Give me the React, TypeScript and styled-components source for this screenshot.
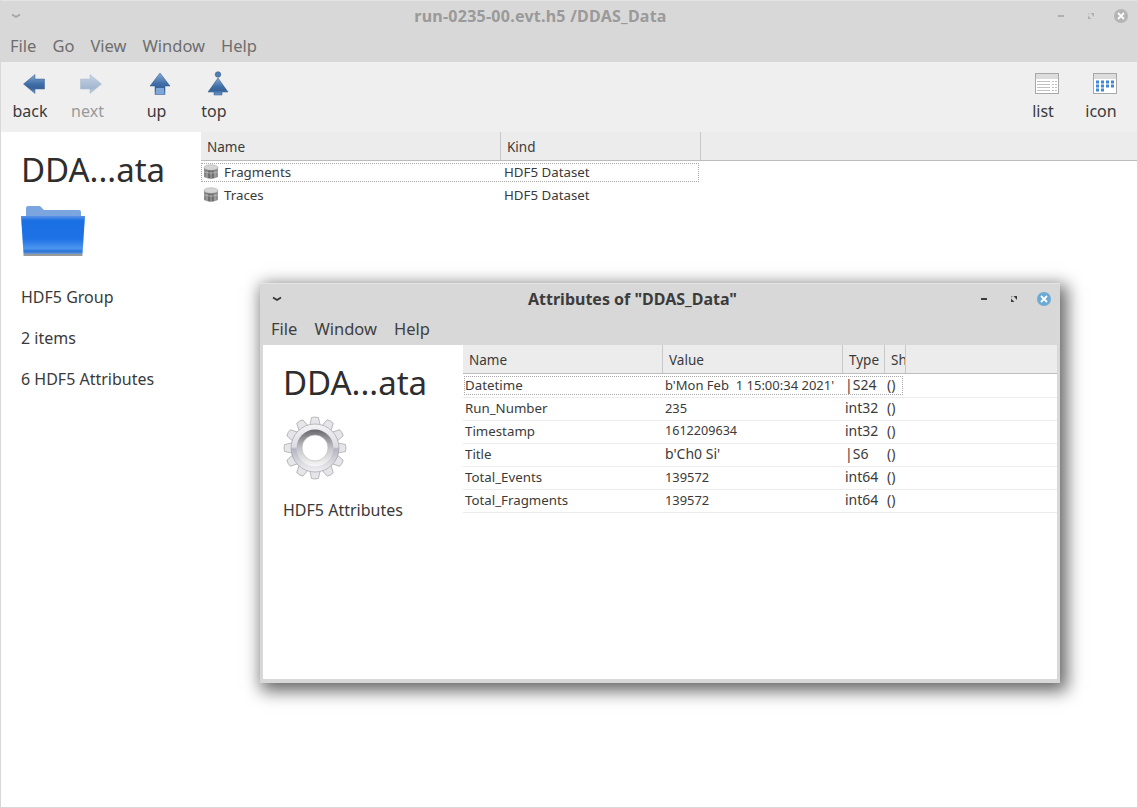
import React from 'react';
import styled, { createGlobalStyle } from 'styled-components';

const GlobalStyle = createGlobalStyle`
  html, body {
    margin: 0;
    padding: 0;
    height: 100%;
    overflow: hidden;
    background: #fff;
  }
  body {
    font-family: "Noto Sans", "Open Sans", sans-serif;
  }
`;

const Desktop = styled.div`
  position: relative;
  width: 1138px;
  height: 808px;
  overflow: hidden;
`;

const MainWindow = styled.div`
  display: flex;
  flex-direction: column;
  height: 100%;
  box-sizing: border-box;
  border-left: 1px solid #d8d8d8;
  border-right: 1px solid #d8d8d8;
  border-bottom: 1px solid #d8d8d8;
  background: #fff;
`;

const TitleBar = styled.div`
  display: flex;
  align-items: center;
  height: 31px;
  background: #d8d8d8;
  border-top: 1px solid #e4e4e4;
  box-sizing: border-box;
  flex: none;
`;

const TitleMenuButton = styled.span<{ $active?: boolean; $left: number }>`
  display: flex;
  width: 12px;
  margin-left: ${(p) => p.$left}px;
  color: ${(p) => (p.$active ? '#333' : '#a4a4a4')};
  flex: none;
`;

const TitleText = styled.div<{ $active?: boolean }>`
  flex: 1;
  text-align: center;
  padding-left: 5px;
  font-size: 16px;
  font-weight: 700;
  letter-spacing: ${(p) => (p.$active ? 0 : 0.25)}px;
  color: ${(p) => (p.$active ? '#3c3c3c' : '#9a9a9a')};
  white-space: nowrap;
`;

const WindowControls = styled.div`
  display: flex;
  align-items: center;
  gap: 16px;
  margin-right: 9px;
  flex: none;
`;

const MenuBar = styled.div<{ $left: number; $gap: number }>`
  display: flex;
  align-items: center;
  gap: ${(p) => p.$gap}px;
  height: 31px;
  padding: 0 0 3px ${(p) => p.$left}px;
  box-sizing: border-box;
  background: #d8d8d8;
  flex: none;
`;

const MenuItem = styled.span<{ $active?: boolean }>`
  font-size: 16.5px;
  color: ${(p) => (p.$active ? '#3f3f3f' : '#6e6e6e')};
`;

const Toolbar = styled.div`
  display: flex;
  align-items: flex-start;
  height: 70px;
  padding-right: 7px;
  background: #efefef;
  flex: none;
`;

const ToolButton = styled.div<{ $width: number; $disabled?: boolean }>`
  display: flex;
  flex-direction: column;
  align-items: center;
  width: ${(p) => p.$width}px;
  padding-top: 10px;
  font-size: 16px;
  line-height: 22px;
  color: ${(p) => (p.$disabled ? '#9a9a9a' : '#3a3a3a')};
`;

const ToolIcon = styled.div`
  display: flex;
  align-items: center;
  justify-content: center;
  height: 24px;
  margin-bottom: 4px;
  padding-left: 7px;
`;

const ToolSpacer = styled.div`
  flex: 1;
`;

const Content = styled.div`
  display: flex;
  flex: 1;
  min-height: 0;
`;

const Sidebar = styled.div<{ $width: number }>`
  display: flex;
  flex-direction: column;
  align-items: flex-start;
  box-sizing: border-box;
  width: ${(p) => p.$width}px;
  padding: 18px 0 0 20px;
  flex: none;
`;

const BigName = styled.div`
  font-size: 33px;
  line-height: 40px;
  color: #2e2e2e;
`;

const SideText = styled.div<{ $top: number }>`
  margin-top: ${(p) => p.$top}px;
  font-size: 16px;
  line-height: 22px;
  color: #3a3a3a;
`;

const IconSlot = styled.div<{ $top: number }>`
  display: flex;
  margin: ${(p) => p.$top}px 0 0 -1px;
`;

const TablePane = styled.div`
  flex: 1;
  min-width: 0;
`;

const HeaderRow = styled.div<{ $after?: number }>`
  display: flex;
  height: 29px;
  margin-bottom: ${(p) => p.$after ?? 0}px;
  box-sizing: border-box;
  background: #ececec;
  border-bottom: 1px solid #bdbdbd;
`;

const HeaderCell = styled.div<{ $width: number }>`
  width: ${(p) => p.$width}px;
  box-sizing: border-box;
  padding-left: 6px;
  border-right: 1px solid #c8c8c8;
  font-size: 13.5px;
  line-height: 30px;
  color: #3a3a3a;
  overflow: hidden;
  white-space: nowrap;
  flex: none;
`;

const Row = styled.div<{ $ruled?: boolean }>`
  position: relative;
  display: flex;
  align-items: center;
  height: 23px;
  box-sizing: border-box;
  padding-bottom: ${(p) => (p.$ruled ? 3 : 2)}px;
  border-bottom: ${(p) => (p.$ruled ? '1px solid #ececec' : '0')};
`;

const Cell = styled.div<{ $width: number; $size?: number }>`
  display: flex;
  align-items: center;
  gap: 5px;
  width: ${(p) => p.$width}px;
  box-sizing: border-box;
  padding-left: 2px;
  font-size: ${(p) => p.$size ?? 13.3}px;
  color: #3a3a3a;
  white-space: pre;
  flex: none;
`;

const FocusBox = styled.div<{ $width: number; $left: number; $top: number }>`
  position: absolute;
  left: ${(p) => p.$left}px;
  top: ${(p) => p.$top}px;
  width: ${(p) => p.$width}px;
  height: 19px;
  box-sizing: border-box;
  border: 1px dotted #a8a8a8;
  pointer-events: none;
`;

const Dialog = styled.div`
  position: absolute;
  left: 260px;
  top: 283px;
  width: 800px;
  height: 400px;
  display: flex;
  flex-direction: column;
  box-sizing: border-box;
  background: #d8d8d8;
  box-shadow: 4px 5px 16px 3px rgba(0, 0, 0, 0.6);
`;

const DialogBody = styled.div`
  display: flex;
  flex: 1;
  min-height: 0;
  margin: 0 3px 4px 3px;
  background: #fff;
`;

const CloseDot = styled.span<{ $active?: boolean }>`
  display: flex;
  align-items: center;
  justify-content: center;
  width: 14px;
  height: 14px;
  border-radius: 50%;
  background: ${(p) => (p.$active ? '#6aaad3' : '#b4b4b4')};
`;

const Chevron = () => (
  <svg width="12" height="8" viewBox="0 0 12 8">
    <path d="M2 2.5 L6 5 L10 2.5" fill="none" stroke="currentColor" strokeWidth="1.6" />
  </svg>
);

const Minimize = ({ color }: { color: string }) => (
  <svg width="14" height="10" viewBox="0 0 14 10">
    <rect x="4" y="4" width="6" height="2" fill={color} />
  </svg>
);

const Restore = ({ color }: { color: string }) => (
  <svg width="14" height="10" viewBox="0 0 14 10">
    <path d="M6.5 2H10V6ZM4 4.5V8H7.5Z" fill={color} />
    <path d="M4 2H6L4 4Z" fill={color} opacity="0.45" />
  </svg>
);

const CloseIcon = () => (
  <svg width="8" height="8" viewBox="0 0 8 8">
    <path d="M1 1 L7 7 M7 1 L1 7" stroke="#fff" strokeWidth="1.8" />
  </svg>
);

const ArrowDefs = ({ id, faded }: { id: string; faded?: boolean }) => (
  <defs>
    <linearGradient id={id} x1="0" y1="0" x2="0" y2="1">
      <stop offset="0" stopColor={faded ? '#c8d5e4' : '#86a9d2'} />
      <stop offset="0.5" stopColor={faded ? '#aebfd6' : '#3f6ea8'} />
      <stop offset="0.72" stopColor={faded ? '#a4b8d1' : '#386399'} />
      <stop offset="1" stopColor={faded ? '#c2d0e2' : '#6f9bd0'} />
    </linearGradient>
  </defs>
);

const BackIcon = () => (
  <svg width="22" height="22" viewBox="0 0 22 22">
    <ArrowDefs id="backFill" />
    <path d="M0.5 11 L12 1.5 V6 H21.5 V16 H12 V20.5 Z" fill="url(#backFill)" stroke="#3d6394" strokeWidth="0.5" />
  </svg>
);

const NextIcon = () => (
  <svg width="22" height="22" viewBox="0 0 22 22">
    <ArrowDefs id="nextFill" faded />
    <path d="M21.5 11 L10 1.5 V6 H0.5 V16 H10 V20.5 Z" fill="url(#nextFill)" stroke="#a9bbd0" strokeWidth="0.5" />
  </svg>
);

const UpIcon = () => (
  <svg width="22" height="24" viewBox="0 0 22 24">
    <ArrowDefs id="upFill" />
    <path d="M11 1 L21 14 H16 V22.5 H6 V14 H1 Z" fill="url(#upFill)" stroke="#2f5688" strokeWidth="0.5" />
    <rect x="7" y="16" width="8" height="6" fill="#7ea6d8" />
  </svg>
);

const TopIcon = () => (
  <svg width="22" height="26" viewBox="0 0 22 26">
    <ArrowDefs id="topFill" />
    <circle cx="11" cy="3.5" r="2.8" fill="#4f7cb2" stroke="#2f5688" strokeWidth="0.5" />
    <path d="M11 7 L21 21 H15 V24 H7 V21 H1 Z" fill="url(#topFill)" stroke="#2f5688" strokeWidth="0.5" />
  </svg>
);

const ViewFrame = ({ children }: { children: React.ReactNode }) => (
  <svg width="24" height="22" viewBox="0 0 24 22">
    <rect x="0.5" y="0.5" width="23" height="20" fill="#fff" stroke="#a8a8a8" />
    <rect x="1" y="1" width="22" height="5" fill="#dcdcdc" />
    {children}
  </svg>
);

const ListViewIcon = () => (
  <ViewFrame>
    {[8, 11, 14, 17].map((y) => (
      <g key={y}>
        <rect x="2" y={y} width="13" height="1" fill="#c0c0c0" />
        <rect x="17" y={y} width="2" height="1" fill="#c0c0c0" />
        <rect x="20" y={y} width="2" height="1" fill="#c0c0c0" />
      </g>
    ))}
  </ViewFrame>
);

const IconViewIcon = () => (
  <ViewFrame>
    {[7.5, 11.5, 15.5].map((y, r) =>
      [3, 8, 13, 18].map((x, c) =>
        r === 2 && c > 1 ? null : (
          <rect key={`${x}-${y}`} x={x} y={y} width="3" height="3" fill="#3f86dc" />
        ),
      ),
    )}
  </ViewFrame>
);

const FolderIcon = () => (
  <svg width="66" height="54" viewBox="0 0 66 54">
    <defs>
      <linearGradient id="folderFront" x1="0" y1="0" x2="0" y2="1">
        <stop offset="0" stopColor="#5c93e6" />
        <stop offset="0.12" stopColor="#1a6fe2" />
        <stop offset="0.6" stopColor="#1e72e6" />
        <stop offset="0.85" stopColor="#4d95ee" />
        <stop offset="0.93" stopColor="#2a74d6" />
        <stop offset="1" stopColor="#6f9ad4" />
      </linearGradient>
    </defs>
    <path d="M6 11 V3 Q6 1 8 1 H20 L24 5 H59 Q61 5 61 7 V14 H6 Z" fill="#7ba5df" />
    <path d="M1 11 H65 L62.5 49 H3.5 Z" fill="url(#folderFront)" />
    <rect x="3.5" y="49" width="59" height="2" fill="#9a9a9a" />
  </svg>
);

const DatasetIcon = () => (
  <svg width="16" height="16" viewBox="0 0 16 16">
    <defs>
      <linearGradient id="drumSide" x1="0" y1="0" x2="1" y2="0">
        <stop offset="0" stopColor="#8f8f8f" />
        <stop offset="0.5" stopColor="#5f5f5f" />
        <stop offset="1" stopColor="#9a9a9a" />
      </linearGradient>
    </defs>
    <path d="M1 3.5 V13 Q8 16.5 15 13 V3.5 Z" fill="url(#drumSide)" />
    <ellipse cx="8" cy="3.5" rx="7" ry="2.8" fill="#d4d4d4" stroke="#a8a8a8" strokeWidth="0.5" />
    <path d="M4 7 V14 M8 7.5 V15 M12 7 V14" stroke="#b5b5b5" strokeWidth="1" />
    <path d="M1 8 Q8 10.5 15 8" stroke="#bdbdbd" strokeWidth="0.7" fill="none" />
  </svg>
);

const GEAR_TEETH = Array.from({ length: 12 }, (_, i) => i * 30);

const GearIcon = () => (
  <svg width="66" height="66" viewBox="0 0 66 66">
    <defs>
      <linearGradient id="gearBody" x1="0" y1="0" x2="0" y2="1">
        <stop offset="0" stopColor="#f4f4f6" />
        <stop offset="0.48" stopColor="#dcdce2" />
        <stop offset="0.52" stopColor="#b4b4c2" />
        <stop offset="1" stopColor="#f2f2f4" />
      </linearGradient>
      <linearGradient id="gearRing" x1="0" y1="0" x2="0" y2="1">
        <stop offset="0" stopColor="#66666c" />
        <stop offset="0.5" stopColor="#c4c4c8" />
        <stop offset="1" stopColor="#f8f8f8" />
      </linearGradient>
    </defs>
    <g stroke="#97979c" strokeWidth="0.6">
      {GEAR_TEETH.map((a) => (
        <path key={a} d="M27.5 12 L29.5 2.5 Q33 1.5 36.5 2.5 L38.5 12 Z" fill="#e6e6ea" transform={`rotate(${a} 33 33)`} />
      ))}
      <circle cx="33" cy="33" r="24" fill="url(#gearBody)" />
    </g>
    <circle cx="33" cy="33" r="18.5" fill="url(#gearRing)" />
    <circle cx="33" cy="33" r="13" fill="#fff" stroke="#b4b4b8" strokeWidth="0.6" />
  </svg>
);

const attributes = [
  { name: 'Datetime', value: "b'Mon Feb  1 15:00:34 2021'", type: '|S24', size: 13 },
  { name: 'Run_Number', value: '235', type: 'int32', size: 12.9 },
  { name: 'Timestamp', value: '1612209634', type: 'int32', size: 12.6 },
  { name: 'Title', value: "b'Ch0 Si'", type: '|S6', size: 14 },
  { name: 'Total_Events', value: '139572', type: 'int64', size: 12.9 },
  { name: 'Total_Fragments', value: '139572', type: 'int64', size: 12.9 },
];

export default function App() {
  return (
    <Desktop>
      <GlobalStyle />
      <MainWindow>
        <TitleBar>
          <TitleMenuButton $left={9}>
            <Chevron />
          </TitleMenuButton>
          <TitleText>run-0235-00.evt.h5 /DDAS_Data</TitleText>
          <WindowControls>
            <Minimize color="#b0b0b0" />
            <Restore color="#b0b0b0" />
            <CloseDot>
              <CloseIcon />
            </CloseDot>
          </WindowControls>
        </TitleBar>
        <MenuBar $left={9} $gap={16}>
          {['File', 'Go', 'View', 'Window', 'Help'].map((m) => (
            <MenuItem key={m}>{m}</MenuItem>
          ))}
        </MenuBar>
        <Toolbar>
          <ToolButton $width={58}>
            <ToolIcon><BackIcon /></ToolIcon>
            back
          </ToolButton>
          <ToolButton $width={57} $disabled>
            <ToolIcon><NextIcon /></ToolIcon>
            next
          </ToolButton>
          <ToolButton $width={81}>
            <ToolIcon><UpIcon /></ToolIcon>
            up
          </ToolButton>
          <ToolButton $width={34}>
            <ToolIcon><TopIcon /></ToolIcon>
            top
          </ToolButton>
          <ToolSpacer />
          <ToolButton $width={58}>
            <ToolIcon><ListViewIcon /></ToolIcon>
            list
          </ToolButton>
          <ToolButton $width={58}>
            <ToolIcon><IconViewIcon /></ToolIcon>
            icon
          </ToolButton>
        </Toolbar>
        <Content>
          <Sidebar $width={200}>
            <BigName>DDA...ata</BigName>
            <IconSlot $top={15}>
              <FolderIcon />
            </IconSlot>
            <SideText $top={27}>HDF5 Group</SideText>
            <SideText $top={19}>2 items</SideText>
            <SideText $top={19}>6 HDF5 Attributes</SideText>
          </Sidebar>
          <TablePane>
            <HeaderRow>
              <HeaderCell $width={300}>Name</HeaderCell>
              <HeaderCell $width={200}>Kind</HeaderCell>
            </HeaderRow>
            {['Fragments', 'Traces'].map((name, i) => (
              <Row key={name}>
                {i === 0 && <FocusBox $left={0} $top={2} $width={498} />}
                <Cell $width={301}>
                  <DatasetIcon />
                  {name}
                </Cell>
                <Cell $width={196}>HDF5 Dataset</Cell>
              </Row>
            ))}
          </TablePane>
        </Content>
      </MainWindow>

      <Dialog>
        <TitleBar>
          <TitleMenuButton $active $left={11}>
            <Chevron />
          </TitleMenuButton>
          <TitleText $active>Attributes of "DDAS_Data"</TitleText>
          <WindowControls>
            <Minimize color="#3c3c3c" />
            <Restore color="#3c3c3c" />
            <CloseDot $active>
              <CloseIcon />
            </CloseDot>
          </WindowControls>
        </TitleBar>
        <MenuBar $left={11} $gap={17}>
          {['File', 'Window', 'Help'].map((m) => (
            <MenuItem key={m} $active>{m}</MenuItem>
          ))}
        </MenuBar>
        <DialogBody>
          <Sidebar $width={200}>
            <BigName>DDA...ata</BigName>
            <IconSlot $top={12}>
              <GearIcon />
            </IconSlot>
            <SideText $top={18}>HDF5 Attributes</SideText>
          </Sidebar>
          <TablePane>
            <HeaderRow $after={1}>
              <HeaderCell $width={200}>Name</HeaderCell>
              <HeaderCell $width={180}>Value</HeaderCell>
              <HeaderCell $width={42}>Type</HeaderCell>
              <HeaderCell $width={21}>Sh</HeaderCell>
            </HeaderRow>
            {attributes.map((a, i) => (
              <Row key={a.name} $ruled>
                {i === 0 && <FocusBox $left={1} $top={1} $width={439} />}
                <Cell $width={200}>{a.name}</Cell>
                <Cell $width={180} $size={a.size}>{a.value}</Cell>
                <Cell $width={42} $size={14}>{a.type}</Cell>
                <Cell $width={30} $size={14}>()</Cell>
              </Row>
            ))}
          </TablePane>
        </DialogBody>
      </Dialog>
    </Desktop>
  );
}
